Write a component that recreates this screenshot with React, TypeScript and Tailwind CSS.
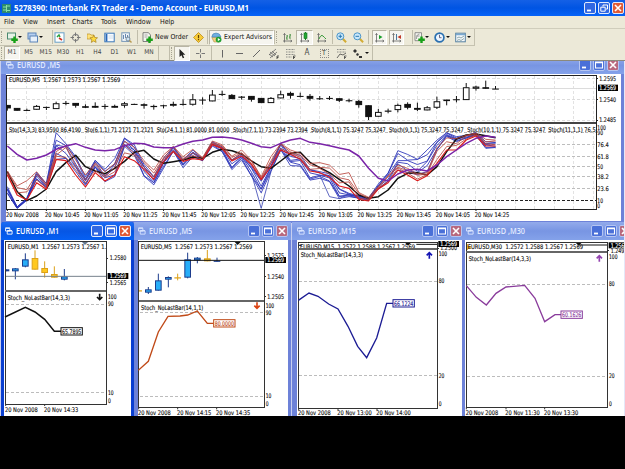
import type { ReactNode } from 'react';

const UI_FONT = "font-['DejaVu_Sans_Condensed','DejaVu_Sans',sans-serif]";

/* ---------- toolbar icons ---------- */

type IconName =
  | 'newChart' | 'profiles' | 'market' | 'crosshair' | 'navigator' | 'terminal' | 'tester'
  | 'order' | 'warning' | 'experts' | 'bars' | 'candles' | 'line' | 'zoomIn' | 'zoomOut'
  | 'scroll' | 'shift' | 'indicators' | 'clock' | 'template' | 'cursor' | 'cross' | 'vline'
  | 'hline' | 'trend' | 'channel' | 'fibo' | 'fan' | 'arrows';

const axes = <path d="M2.5 1.5V10.5M1 9H10M1.5 3l1-1.500 1 1.500M8.500 8l1.500 1-1.500 1" stroke="#666" fill="none" strokeWidth=".8" />;
const plus = <path d="M7.5 4.500V11M4.300 7.800H10.800" stroke="#18a018" strokeWidth="2.400" />;

const icons: Record<IconName, ReactNode> = {
  newChart: <><rect x=".5" y="1" width="8" height="6" fill="#e6f2e6" stroke="#4c8a70" />{plus}</>,
  profiles: <><rect x="1" y="1" width="8" height="6" fill="#b8d0f0" stroke="#5a84b8" /><rect x="3" y="4" width="7.5" height="6" fill="#e8f0fa" stroke="#5a84b8" /></>,
  market: <><rect x="1" y=".8" width="9" height="9.4" fill="#fff" stroke="#68a0c8" /><path d="M3 5l2-2 1 2" stroke="#2aa040" fill="none" strokeWidth="1.5" /><path d="M5 6l3 2" stroke="#d03020" strokeWidth="1.6" /></>,
  crosshair: <><circle cx="5.5" cy="5.5" r="3.1" fill="none" stroke="#888" strokeWidth="1.2" /><path d="M5.5 .5v3.500M5.500 7v3.500M.5 5.500h3.500M7 5.500h3.500" stroke="#777" /></>,
  navigator: <><path d="M0 2h3l1 1h3v4H0z" fill="#ffe27a" stroke="#b8902a" strokeWidth=".7" /><path d="M6.7 3.2l1.1 2.3 2.7.3-2 1.8.6 2.8-2.4-1.4-2.4 1.4.6-2.8-2-1.8 2.7-.3z" fill="#ffdc40" stroke="#a88020" strokeWidth=".7" /></>,
  terminal: <><rect x=".8" y="1.2" width="9.4" height="8.6" fill="#f8fbff" stroke="#3c78b8" /><path d="M2.5 2v7.5" stroke="#2868b8" strokeWidth="1.8" /><path d="M4.5 4h5M4.5 6h5" stroke="#bcd" strokeWidth=".6" /></>,
  tester: <><rect x=".8" y=".8" width="7.6" height="8.6" fill="#f0f4f8" stroke="#7898b8" /><path d="M2.5 3v4M4.5 2v4M6.5 3v4" stroke="#6888b0" /><circle cx="7" cy="7" r="2" fill="#cfe4f5" stroke="#678" strokeWidth=".8" /><path d="M8.5 8.5l2 2" stroke="#b89a50" strokeWidth="1.4" /></>,
  order: <><path d="M1 .7h5.5L8.500 3v6.500H1z" fill="#f5f5f0" stroke="#666" strokeWidth=".8" /><path d="M2.500 3h3M2.500 5h3" stroke="#888" strokeWidth=".7" />{plus}</>,
  warning: <><path d="M5.500 .5l5 5-5 5-5-5z" fill="#f8cc38" stroke="#bb8a18" strokeWidth=".8" /><path d="M5.500 3v3.200M5.500 7v1.300" stroke="#644400" strokeWidth="1.200" /></>,
  experts: <><path d="M.8 5.500h9L8 10H3z" fill="#f4d080" stroke="#a08030" strokeWidth=".5" /><path d="M.8 5Q1 1 5 1t5 4z" fill="#70b0e0" stroke="#4880b0" strokeWidth=".6" /><circle cx="7.600" cy="7.600" r="2.900" fill="#20a030" /><path d="M6.800 6l2.400 1.600-2.400 1.600z" fill="#fff" /></>,
  bars: <>{axes}<path d="M5 3v5M4 6h1M5 4h1M8 2v5M7 5h1M8 3h1" stroke="#3a8a3a" strokeWidth=".9" /></>,
  candles: <>{axes}<path d="M6.500 0v8" stroke="#168a20" /><rect x="5" y="1" width="3" height="5.500" fill="#25a835" stroke="#13701c" strokeWidth=".6" /></>,
  line: <>{axes}<path d="M3 7q2-5 4-3t3 3" stroke="#3a9a3a" fill="none" /></>,
  zoomIn: <><path d="M6.500 6.500l3.600 3.800" stroke="#d3ac34" strokeWidth="2" /><circle cx="4.300" cy="4.300" r="3.500" fill="#c9e7fa" stroke="#4a94c8" /><path d="M2.500 4.300h3.600M4.300 2.500v3.600" stroke="#2878b0" /></>,
  zoomOut: <><path d="M6.500 6.500l3.600 3.800" stroke="#d3ac34" strokeWidth="2" /><circle cx="4.300" cy="4.300" r="3.500" fill="#c9e7fa" stroke="#4a94c8" /><path d="M2.500 4.300h3.600" stroke="#2878b0" /></>,
  scroll: <>{axes}<path d="M5 3l3.500 2L5 7.200z" fill="#1ba02c" /></>,
  shift: <>{axes}<path d="M5.500 2v6" stroke="#4a7aa0" /><path d="M10 3L6.500 5 10 7z" fill="#c03828" /></>,
  indicators: <><path d="M1 .7h6.500v8H1z" fill="#f5f5f0" stroke="#777" strokeWidth=".8" /><path d="M2.500 7q0-5 3-5M2.500 4h3" stroke="#777" fill="none" strokeWidth=".7" />{plus}</>,
  clock: <><circle cx="5.500" cy="5.500" r="4.400" fill="#eef6ff" stroke="#2a70b0" strokeWidth="1.700" /><path d="M5.500 2.800v2.900h2" stroke="#446" fill="none" strokeWidth=".8" /></>,
  template: <><rect x=".7" y="1.200" width="9.600" height="8.600" fill="#f4f8fc" stroke="#5580a0" /><path d="M1 2.500h9" stroke="#78a8d0" strokeWidth="1.500" /><path d="M2 6l2-1 2 1 3-2M2 8.500l2-1 2 1 3-2" stroke="#688" fill="none" strokeWidth=".7" /></>,
  cursor: <path d="M3.500 1v8l2-1.700 1.300 3 1.400-.6-1.300-2.900h2.400z" fill="#222" />,
  cross: <path d="M5.500 1v3.500M5.500 6.500V10M1 5.500h3.500M6.500 5.500H10" stroke="#777" />,
  vline: <path d="M5.500 2v7.500" stroke="#666" />,
  hline: <path d="M2 5.500h7" stroke="#666" />,
  trend: <path d="M2 9l7-7" stroke="#666" />,
  channel: <><path d="M1 7l7-6M2 10l7-6M2 4l5 4M4 3l4 4M1 6l4 3" stroke="#666" strokeWidth=".8" /><path d="M9 11V8h2M9 9.500h1.500" stroke="#333" fill="none" strokeWidth=".8" /></>,
  fibo: <><path d="M1 1.500h9M1 4h9M1 6.500h9M1 9h6" stroke="#777" strokeWidth=".8" strokeDasharray="1 .5" /><path d="M8.500 11V8h2M8.500 9.500h1.500" stroke="#333" fill="none" strokeWidth=".8" /></>,
  fan: <><path d="M1 1.500h9M1 4h9" stroke="#777" strokeWidth=".8" strokeDasharray="1 .5" /><path d="M1 10l3-4 3 1 3-2M8.500 11V8h2M8.500 9.500h1.500" stroke="#444" fill="none" strokeWidth=".8" /></>,
  arrows: <path d="M1 3l2-2 2 2-2 2zM4 6l2-1 1 2-2 1zM7 8h3v2H7z" fill="#333" />,
};

function Icon({ name, pressed, className = 'w-[17px]' }: { name: IconName; pressed?: boolean; className?: string }) {
  return (
    <div
      className={`flex h-[15px] shrink-0 items-center justify-center ${className} ${
        pressed ? 'border border-[#b8b5a4] border-r-white border-b-white bg-[#f6f5ef]' : ''
      }`}
    >
      <svg className="size-[11px] shrink-0" viewBox="0 0 11 11">{icons[name]}</svg>
    </div>
  );
}

function Caret() {
  return (
    <div className="flex w-1 shrink-0 justify-center">
      <svg className="h-[2px] w-[4px]" viewBox="0 0 4 2"><path d="M0 0h4L2 2z" fill="#111" /></svg>
    </div>
  );
}

const Grip = () => <div className="mx-px h-3 w-[2px] shrink-0 border-l border-dotted border-[#a5a292]" />;
const Sep = ({ className = '' }: { className?: string }) => (
  <div className={`h-[14px] w-px shrink-0 bg-[#c0bdab] ${className}`} />
);

/* ---------- window chrome ---------- */

function WinButton({ kind, dim }: { kind: 'min' | 'max' | 'restore' | 'close'; dim?: boolean }) {
  const tone =
    kind === 'close'
      ? dim ? 'bg-[#b8697f]' : 'bg-[#df5b36]'
      : dim ? 'bg-[#4a70d8]' : 'bg-[#3168e2]';
  return (
    <div className={`flex size-3 shrink-0 items-center justify-center rounded-[2px] border ${dim ? 'border-[#b5c5f2]' : 'border-[#e2eafb]'} ${tone}`}>
      <svg className="size-[10px] shrink-0" viewBox="0 0 10 10" fill="none" stroke="#fff">
        {kind === 'min' && <path d="M2 7.500h4" strokeWidth="1.800" />}
        {kind === 'max' && <path d="M1.500 2h7v6h-7zM1.500 2.700h7" strokeWidth="1.100" />}
        {kind === 'restore' && <path d="M4 3.500V2h4.500v4H7M1.800 4.200h4.400v4H1.800z" />}
        {kind === 'close' && <path d="M2 2l6 6M8 2l-6 6" strokeWidth="1.600" />}
      </svg>
    </div>
  );
}

interface ChartWindowProps {
  title: string;
  active?: boolean;
  frame: string;
  bar: string;
  children: ReactNode;
}

function ChartWindow({ title, active, frame, bar, children }: ChartWindowProps) {
  return (
    <section className={`absolute flex flex-col overflow-hidden ${active ? 'bg-[#0a3fd0]' : 'bg-[#6d82d8]'} ${frame}`}>
      <header
        className={`flex shrink-0 items-center ${bar} ${
          active
            ? 'bg-linear-to-b from-[#1c6cf5] via-[#0656e4] to-[#0560f4]'
            : 'bg-linear-to-b from-[#93abeb] via-[#7895e3] to-[#84a2ea]'
        }`}
      >
        <svg className="mr-[3px] size-2 shrink-0" viewBox="0 0 9 9" fill="none" stroke={active ? '#fff' : '#dce6ff'}>
          <path d="M.5 1.500h5v3h-5zM2.500 4.500h5.500v3.500H2.500zM.5 1h5M2.500 4h5.500" />
        </svg>
        <span className="grow">
          <svg className="block h-3 w-[52px] overflow-visible font-['Open_Sans',sans-serif]" viewBox="0 0 52 12">
            <text
              x="0" y="9" fontSize="8.800" fontWeight="600" fill={active ? '#fff' : '#e2eaff'}
              textLength={title.length * 4.800 - 4.800} lengthAdjust="spacingAndGlyphs"
            >
              {title}
            </text>
          </svg>
        </span>
        <div className="flex shrink-0 gap-[2px]">
          <WinButton kind="min" dim={!active} />
          <WinButton kind="max" dim={!active} />
          <WinButton kind="close" dim={!active} />
        </div>
      </header>
      {children}
    </section>
  );
}

/* ---------- charts (all chart units are thirds of a pixel) ---------- */

function Label({ x, y, w, children, fill = '#111' }: { x: number; y: number; w: number; children: string; fill?: string }) {
  return (
    <text x={x} y={y} textLength={w} lengthAdjust="spacingAndGlyphs" fontSize="19" fill={fill} stroke={fill} strokeWidth=".4" xmlSpace="preserve">
      {children}
    </text>
  );
}

// [x, body top, body bottom, wick top, wick bottom, rising]
type Candle = [number, number, number, number, number, 0 | 1];

interface MiniChartProps {
  view: string;
  size: string;
  right: number;
  top: [number, number];
  low: [number, number];
  left: number;
  header: string;
  headerBox: [number, number];
  priceLine: { y: number; x?: number; color: string };
  prices: [string, number][];
  tagY: number;
  study: string;
  studyY: number;
  levels: [string, number, number?][];
  points: string;
  color: string;
  thick?: boolean;
  value: string;
  valueAt: [number, number];
  arrow: { x: number; y: number; up?: boolean; color: string };
  marker: number;
  markerColor?: string;
  dates: [string, number][];
  dateY: number;
  candles: Candle[];
}

function MiniChart(p: MiniChartProps) {
  const [t0, t1] = p.top;
  const [l0, l1] = p.low;
  const { arrow } = p;
  return (
    <svg className={`shrink-0 bg-white ${UI_FONT} ${p.size}`} viewBox={p.view} preserveAspectRatio="none">
      <defs>
        <clipPath id={`pane-${p.value}`}>
          <rect x={p.left} y={t0} width={p.right - p.left} height={t1 - t0} />
        </clipPath>
      </defs>
      <g clipPath={`url(#pane-${p.value})`}>
        {p.candles.map(([x, a, b, w0, w1, up]) => (
          <g key={x} stroke={up ? '#1c3c8c' : '#dca018'} fill={up ? '#28aef8' : '#ffc81e'} strokeWidth="3">
            <path d={`M${x} ${w0}V${w1}`} />
            <rect x={x - 8.500} y={a + 1.500} width="17" height={Math.max(b - a - 3, 0.500)} />
          </g>
        ))}
        <path d={`M${p.priceLine.x ?? p.left} ${p.priceLine.y}H${p.right}`} stroke={p.priceLine.color} strokeWidth="3" />
        <Label x={p.headerBox[0]} y={92} w={p.headerBox[1]}>{p.header}</Label>
        <path d={`M${p.marker - 9} ${t0 + 2}h18l-9 9z`} fill={p.markerColor ?? '#111'} />
      </g>
      <g fill="none" shapeRendering="crispEdges">
        <path d={`M${p.left} ${l1}V${t0}H${p.right}V${l1}z`} stroke="#333" strokeWidth="3" />
        <path d={`M${p.left} ${(t1 + l0) / 2}H${p.right}`} stroke="#666" strokeWidth="6" />
        {p.prices.map(([, y]) => <path key={y} d={`M${p.right} ${y}h6`} stroke="#333" strokeWidth="3" />)}
        {p.levels.filter((l) => l[2]).map(([t, , y]) => (
          <path key={t} d={`M${p.left + 3} ${y}H${p.right}`} stroke="#bcbcbc" strokeWidth="3" strokeDasharray="9 6" />
        ))}
      </g>
      {p.prices.map(([t, y]) => <Label key={t} x={p.right + 10} y={y + 7} w={50}>{t}</Label>)}
      <rect x={p.right + 4} y={p.tagY - 9} width="62" height="18" fill="#000" />
      <Label x={p.right + 10} y={p.tagY + 7} w={50} fill="#fff">1.2569</Label>
      {p.levels.map(([t, y]) => <Label key={t} x={p.right + 5} y={y + 7} w={t.length * 8.500}>{t}</Label>)}
      <Label x={p.left + 7} y={p.studyY} w={187}>{p.study}</Label>
      <polyline points={p.points} fill="none" stroke={p.color} strokeWidth={p.thick ? 4.500 : 4} />
      <rect x={p.valueAt[0]} y={p.valueAt[1] - 11} width="64" height="22" fill="#fff" stroke={p.color} strokeWidth="3" />
      <Label x={p.valueAt[0] + 3} y={p.valueAt[1] + 7} w={58} fill={p.color}>{p.value}</Label>
      <path
        d={arrow.up ? 'M0 10V-7M-8 0L0 -8L8 0' : 'M0 -10V7M-8 0L0 8L8 0'}
        transform={`translate(${arrow.x} ${arrow.y})`}
        fill="none"
        stroke={arrow.color}
        strokeWidth="5"
      />
      {p.dates.map(([t, x]) => (
        <g key={t}>
          <path d={`M${x + 2} ${l1}v6`} stroke="#333" strokeWidth="3" />
          <Label x={x} y={p.dateY} w={t.endsWith('2008') ? 98 : 103}>{t}</Label>
        </g>
      ))}
    </svg>
  );
}

const barX = (i: number) => 22 + i * 29.290;

// body top, body bottom, wick top, wick bottom, filled
const m5Candles: [number, number, number, number, number][] = [
  [135, 145, 135, 152, 1], [144, 152, 144, 152, 1], [150, 151, 146, 153, 1], [138, 149, 135, 149, 0],
  [141, 142, 140, 150, 1], [130, 147, 125, 147, 0], [129, 131, 123, 136, 1], [129, 137, 129, 143, 1],
  [139, 143, 133, 144, 1], [138, 143, 127, 144, 0], [138, 140, 132, 148, 1], [138, 143, 134, 143, 0],
  [130, 137, 126, 143, 0], [132, 133, 131, 134, 1], [133, 137, 130, 146, 1], [138, 141, 134, 149, 1],
  [136, 138, 134, 145, 1], [132, 137, 125, 140, 0], [132, 133, 118, 137, 1], [118, 134, 102, 137, 0],
  [119, 121, 112, 134, 1], [104, 124, 90, 124, 0], [102, 104, 92, 108, 1], [105, 117, 102, 117, 1],
  [110, 113, 108, 119, 0], [108, 119, 108, 125, 1], [114, 129, 114, 129, 1], [114, 129, 111, 129, 0],
  [103, 115, 92, 115, 0], [99, 107, 95, 116, 1], [108, 109, 98, 112, 1], [108, 116, 102, 122, 1],
  [115, 116, 108, 120, 1], [114, 115, 108, 120, 1], [115, 122, 115, 126, 1], [121, 122, 116, 127, 1],
  [123, 135, 120, 143, 1], [136, 171, 136, 180, 1], [156, 170, 147, 170, 0], [152, 155, 146, 160, 0],
  [135, 150, 131, 157, 0], [132, 143, 127, 148, 1], [144, 149, 128, 153, 1], [142, 151, 138, 151, 0],
  [124, 143, 110, 147, 0], [119, 123, 119, 136, 0], [118, 119, 108, 127, 1], [82, 120, 69, 120, 0],
  [80, 86, 77, 92, 0], [82, 86, 62, 86, 1], [86, 87, 78, 87, 1],
];

const slowLine = [335, 395, 422, 408, 387, 335, 308, 286, 320, 333, 341, 325, 304, 277, 271, 297, 310, 305, 300, 291, 295, 277, 268, 272, 282, 303, 320, 325, 303, 280, 277, 307, 323, 338, 358, 378, 405, 415, 410, 390, 355, 340, 338, 345, 320, 275, 237, 225, 222, 227, 233];
const longLine = [258, 283, 300, 295, 285, 268, 258, 251, 262, 270, 272, 269, 257, 250, 251, 261, 263, 263, 252, 244, 240, 232, 231, 234, 240, 250, 260, 263, 250, 240, 235, 247, 251, 257, 264, 270, 288, 325, 355, 363, 342, 330, 328, 333, 315, 290, 270, 250, 235, 228, 232];

// upper and lower edge of each bundle of oscillators, bar by bar
const blueTop = [380, 440, 415, 335, 370, 218, 245, 290, 350, 298, 328, 295, 232, 254, 310, 350, 295, 258, 300, 270, 295, 245, 260, 298, 280, 315, 360, 310, 247, 285, 285, 325, 335, 340, 385, 400, 407, 414, 372, 335, 272, 283, 293, 270, 238, 218, 230, 225, 218, 245, 245];
const blueLow = [400, 446, 421, 358, 385, 298, 300, 335, 376, 325, 365, 350, 262, 285, 350, 376, 325, 275, 323, 290, 303, 258, 275, 332, 300, 350, 400, 335, 272, 317, 318, 365, 355, 365, 418, 410, 415, 421, 387, 368, 330, 338, 350, 335, 270, 230, 245, 235, 226, 265, 265];
const redTop = [333, 375, 362, 333, 372, 275, 250, 300, 345, 305, 335, 310, 240, 262, 300, 330, 285, 257, 290, 268, 292, 243, 254, 288, 270, 300, 350, 290, 248, 270, 280, 308, 308, 313, 342, 338, 395, 412, 380, 345, 315, 325, 340, 338, 260, 233, 236, 224, 219, 238, 238];
const redLow = [345, 405, 420, 368, 388, 298, 302, 345, 381, 338, 363, 345, 290, 302, 328, 358, 305, 275, 304, 296, 300, 254, 265, 303, 288, 313, 359, 320, 270, 283, 298, 333, 338, 352, 378, 385, 418, 423, 387, 368, 330, 345, 362, 347, 310, 270, 270, 240, 228, 258, 258];

const trace = (ys: number[]) => ys.map((y, i) => `${barX(i)},${y}`).join(' ');
const blend = (a: number[], b: number[], t: number) =>
  a.map((y, i) => y + (b[i] - y) * Math.min(1, Math.max(0, t + Math.sin(i * 2.300 + t * 9) * 0.120)));

const levels: [string, number, number][] = [
  ['100', 203, 0], ['90', 217, 0], ['76.4', 253, 253], ['61.8', 289, 289], ['50', 319, 319],
  ['38.2', 349, 349], ['23.6', 386, 386], ['10', 421, 0], ['0', 436, 0],
];
const times = ['2008', '10:45', '11:05', '11:25', '11:45', '12:05', '12:25', '12:45', '13:05', '13:25', '13:45', '14:05', '14:25'];

function MainChart() {
  return (
    <svg className={`ml-[5px] h-[147px] w-[615px] shrink-0 bg-white ${UI_FONT}`} viewBox="18 42 1845 441">
      <defs>
        <clipPath id="study"><rect x="20" y="190" width="1768" height="256" /></clipPath>
      </defs>
      <g shapeRendering="crispEdges" strokeWidth="3" fill="none">
        {Array.from({ length: 30 }, (_, i) => (
          <path key={i} d={`M${barX(2 + i * 2)} 48V446`} stroke="#e2e2e2" strokeDasharray="9 6" />
        ))}
        {[56, 118, 181].map((y) => <path key={y} d={`M20 ${y}H1788`} stroke="#dcdcdc" strokeDasharray="9 6" />)}
        <path d="M20 86H1788" stroke="#dcdcdc" />
        {levels.map(([t, , y]) => y > 0 && <path key={t} d={`M20 ${y}H1788`} stroke="#bdbdbd" strokeDasharray="9 6" />)}
        <path d="M20 421H1788" stroke="#222" strokeDasharray="9 5" />
        <path d="M20 218H1788" stroke="#bbb" strokeDasharray="9 5" />
        <path d="M20 447V46H1788V447z" stroke="#222" />
        <path d="M20 189H1788" stroke="#444" strokeWidth="6" />
        {[56, 118, 181].map((y) => <path key={y} d={`M1788 ${y}h6`} stroke="#222" />)}
      </g>
      <g stroke="#111" strokeWidth="3">
        {m5Candles.map(([a, b, w0, w1, filled], i) => (
          <g key={i}>
            <path d={`M${barX(i)} ${w0}V${w1}`} />
            <rect
              x={Math.max(barX(i) - 8.500, 21)} y={a + 1.200} width={i ? 17 : 10}
              height={Math.max(b - a - 2.400, 0.100)} fill={filled ? '#111' : '#fff'}
            />
          </g>
        ))}
      </g>
      <g fill="none" clipPath="url(#study)" strokeLinejoin="round">
        {[0, 0.200, 0.400, 0.600, 0.800, 1].map((t) => (
          <polyline key={t} points={trace(blend(blueTop, blueLow, t))} stroke="#2832b8" strokeWidth="2.600" />
        ))}
        <polyline points={`${barX(25)},340 ${barX(26)},445 ${barX(27)},335`} stroke="#3d48b4" strokeWidth="2.500" />
        <polyline points={`${barX(32)},345 ${barX(33)},410 ${barX(34)},416 ${barX(35)},402`} stroke="#3d48b4" strokeWidth="2.500" />
        <polyline points={trace(slowLine)} stroke="#111" strokeWidth="4.500" />
        {[0, 0.350, 0.700].map((t) => (
          <polyline key={t} points={trace(blend(redTop, redLow, t))} stroke="#b8443c" strokeWidth="2.500" />
        ))}
        <polyline points={trace(redLow)} stroke="#dc1c1c" strokeWidth="3.500" />
        <polyline points={trace(longLine)} stroke="#7a24a8" strokeWidth="4.500" />
      </g>
      <Label x={27} y={67} w={334}>EURUSD,M5  1.2567 1.2573 1.2567 1.2569</Label>
      <g>
        <Label x={27} y={217} w={216}>Sto(14,3,3) 83.9590 86.4190</Label>
        <Label x={254} y={217} w={207}>Sto(6,1,1) 71.2121 71.2121</Label>
        <Label x={470} y={217} w={218}>Sto(24,1,1) 81.0000 81.0000</Label>
        <Label x={699} y={217} w={224}>Stoch(7,1,1) 73.2394 73.2394</Label>
        <Label x={933} y={217} w={224}>Stoch(8,1,1) 75.3247 75.3247</Label>
        <Label x={1167} y={217} w={224}>Stoch(9,1,1) 75.3247 75.3247</Label>
        <Label x={1402} y={217} w={234}>Stoch(10,1,1) 75.3247 75.3247</Label>
        <Label x={1645} y={217} w={142}>Stoch(11,1,1) 76.5</Label>
      </g>
      <Label x={1798} y={63} w={50}>1.2595</Label>
      <Label x={1798} y={125} w={50}>1.2540</Label>
      <Label x={1798} y={186} w={50}>1.2485</Label>
      <rect x="1794" y="74" width="60" height="19" fill="#000" />
      <Label x={1798} y={91} w={50} fill="#fff">1.2569</Label>
      {levels.map(([t, y]) => <Label key={t} x={1792} y={y + 7} w={t.length * 8.500}>{t}</Label>)}
      {times.map((t, i) => (
        <g key={t}>
          <path d={`M${barX(i * 4)} 447v6`} stroke="#222" strokeWidth="3" />
          <Label x={18 + i * 117.200} y={471} w={i ? 103 : 98}>{`20 Nov ${t}`}</Label>
        </g>
      ))}
    </svg>
  );
}

/* ---------- application ---------- */

const menu: [string, string][] = [
  ['File', 'w-[19px]'], ['View', 'w-[24px]'], ['Insert', 'w-[25px]'], ['Charts', 'w-[29px]'],
  ['Tools', 'w-[25px]'], ['Window', 'w-[34px]'], ['Help', 'w-[24px]'],
];
const periods = ['M5', 'M15', 'M30', 'H1', 'H4', 'D1', 'W1', 'MN'];

export default function App() {
  return (
    <div className={`flex h-[469px] w-[625px] flex-col overflow-hidden bg-black text-[7px] text-[#111] ${UI_FONT}`}>
      <header className="flex h-4 shrink-0 items-center bg-linear-to-b from-[#1460e6] via-[#0054e3] to-[#0763f8] pr-px pl-[2px]">
        <svg className="mr-[3px] size-[9px]" viewBox="0 0 9 9">
          <rect width="9" height="9" fill="#2c8a70" />
          <path d="M1 3h3M5 2h3M1 6h3M5 6.500h3M4.500 1v7" stroke="#8be0a8" />
        </svg>
        <span className="grow">
          <svg className="block h-3 w-[237px] overflow-visible font-['Open_Sans',sans-serif]" viewBox="0 0 237 12">
            <text x="0" y="9" fontSize="8.500" fontWeight="700" fill="#fff" textLength="235" lengthAdjust="spacingAndGlyphs">
              5278390: Interbank FX Trader 4 - Demo Account - EURUSD,M1
            </text>
          </svg>
        </span>
        <div className="flex gap-[2px]">
          <WinButton kind="min" />
          <WinButton kind="restore" />
          <WinButton kind="close" />
        </div>
      </header>

      <nav className="flex h-[13px] shrink-0 items-center border-b border-[#d0cdbc] bg-[#ece9d8] pl-1 leading-none">
        {menu.map(([name, width]) => <span key={name} className={`shrink-0 ${width}`}>{name}</span>)}
      </nav>

      <div className="flex h-[17px] shrink-0 items-center bg-[#ece9d8]">
        <div className="flex h-[17px] w-[475px] items-center border-r border-b border-[#c5c2b0]">
          <Grip />
          <Icon name="newChart" className="ml-[2px] w-[12px]" /><Caret />
          <Icon name="profiles" className="ml-[4px] w-[13px]" /><Caret />
          <Sep className="ml-[9px]" />
          <Icon name="market" className="w-[12px]" />
          <Icon name="crosshair" className="ml-[2px] w-[17px]" />
          <Icon name="navigator" />
          <Icon name="terminal" />
          <Icon name="tester" />
          <Sep className="ml-[2px]" />
          <Icon name="order" className="ml-[3px] w-[13px]" />
          <span className="ml-px w-[35px] shrink-0 text-[6.900px] whitespace-nowrap">New Order</span>
          <Icon name="warning" />
          <Sep />
          <div className="ml-px flex h-[15px] w-[65px] shrink-0 items-center border border-[#b8b5a4] border-r-white border-b-white bg-[#f6f5ef]">
            <Icon name="experts" className="w-[13px]" />
            <span className="ml-px text-[6.800px] whitespace-nowrap">Expert Advisors</span>
          </div>
          <Sep />
          <Grip />
          <Icon name="bars" />
          <Icon name="candles" pressed />
          <Icon name="line" />
          <Sep className="ml-[2px]" />
          <Icon name="zoomIn" />
          <Icon name="zoomOut" />
          <Sep className="ml-px" />
          <Icon name="scroll" pressed className="ml-[3px] w-[15px]" />
          <Icon name="shift" pressed className="ml-[2px] w-[15px]" />
          <Sep className="ml-[8px]" />
          <Icon name="indicators" className="ml-px w-[11px]" /><Caret />
          <Icon name="clock" className="ml-[4px] w-[13px]" /><Caret />
          <Icon name="template" className="ml-[4px] w-[13px]" /><Caret />
        </div>
      </div>

      <div className="flex h-[15px] shrink-0 items-center border-b border-[#8b897c] bg-[#ece9d8] text-[6.500px] text-[#444]">
        <Grip />
        <div className="flex h-[14px] w-4 shrink-0 items-center justify-center border border-[#b8b5a4] border-r-white border-b-white bg-[#f6f5ef]">M1</div>
        {periods.map((name) => <span key={name} className="w-[17.200px] shrink-0 text-center">{name}</span>)}
        <Sep />
        <Sep className="ml-[10px]" />
        <Grip />
        <Icon name="cursor" pressed className="w-4" />
        <Icon name="cross" className="ml-[2px] w-[17px]" />
        <Sep className="ml-[2px]" />
        <Icon name="vline" className="ml-[2px] w-[17px]" />
        <Icon name="hline" />
        <Icon name="trend" />
        <Icon name="channel" />
        <Icon name="fibo" />
        <span className="w-[17px] shrink-0 text-center text-[8px]">A</span>
        <span className="flex w-[17px] shrink-0 justify-center">
          <span className="flex size-[9px] items-center justify-center border border-dotted border-[#888] text-[7px]">T</span>
        </span>
        <Icon name="fan" />
        <Icon name="arrows" className="w-[15px]" /><Caret />
        <Sep className="ml-[3px]" />
      </div>

      <main className="relative h-[355px] shrink-0 overflow-hidden border-r border-[#e4e8f8] bg-[#c8cff0]">
        <ChartWindow title="EURUSD ,M5" frame="top-[-4px] left-[1px] h-[166px] w-[623px]" bar="h-[17px] pr-[5px] pb-[2px] pl-[5px]">
          <MainChart />
        </ChartWindow>

        <ChartWindow title="EURUSD ,M15" frame="top-[161px] left-[292px] h-[194px] w-[172px]" bar="h-[18px] pr-[2px] pb-px pl-[5px]">
          <MiniChart
            view="27 66 498 528" size="ml-[5px] h-[176px] w-[166px]"
            left={31} right={447} top={[72, 90]} low={[96, 571]}
            header="EURUSD,M15  1.2572 1.2588 1.2567 1.2569" headerBox={[36, 345]}
            priceLine={{ y: 79, x: 385, color: '#111' }} prices={[['1.2500', 90]]} tagY={78}
            study="Stoch_NoLastBar(14,3,3)" studyY={118}
            levels={[['100', 107], ['80', 189, 189], ['20', 473, 473], ['0', 558]]}
            points="31,247 63,225 90,235 122,258 150,273 180,325 209,385 236,419 266,360 296,256 315,256"
            color="#1c1c94" value="66.1224" valueAt={[315, 256]} marker={360}
            arrow={{ x: 424, y: 112, up: true, color: '#1414b4' }}
            dates={[['20 Nov 2008', 30], ['20 Nov 13:00', 148], ['20 Nov 14:00', 265]]} dateY={590}
            candles={[[31, 80, 84, 76, 90, 1]]}
          />
        </ChartWindow>

        <ChartWindow title="EURUSD ,M5" frame="top-[161px] left-[134px] h-[194px] w-[157px]" bar="h-[18px] pr-[3px] pb-px pl-[4px]">
          <MiniChart
            view="24 66 450 528" size="ml-[4px] h-[176px] w-[150px]"
            left={26} right={402} top={[70, 246]} low={[251, 568]}
            header="EURUSD,M5  1.2567 1.2573 1.2567 1.2569" headerBox={[32, 335]}
            priceLine={{ y: 127, color: '#111' }} prices={[['1.2575', 113], ['1.2540', 175], ['1.2505', 236]]} tagY={126}
            study="Stoch_NoLastBar(14,1,1)" studyY={275}
            levels={[['100', 263], ['90', 283, 284], ['10', 534, 535], ['0', 556]]}
            points="25,457 55,430 85,342 114,295 150,294 173,291 202,279 232,316 251,316"
            color="#c04a18" value="80.0000" valueAt={[251, 316]} marker={323}
            arrow={{ x: 381, y: 263, color: '#dc4414' }}
            dates={[['20 Nov 2008', 24], ['20 Nov 14:15', 141], ['20 Nov 14:35', 258]]} dateY={590}
            candles={[
              [26, 217, 220, 190, 222, 0], [55, 214, 224, 207, 228, 1], [85, 187, 218, 167, 218, 1],
              [115, 177, 185, 175, 208, 1], [143, 178, 180, 167, 187, 0], [173, 124, 179, 104, 181, 1],
              [202, 119, 127, 117, 136, 1], [232, 121, 130, 96, 130, 0], [261, 128, 131, 119, 131, 1],
            ]}
          />
        </ChartWindow>

        <ChartWindow title="EURUSD ,M1" active frame="top-[161px] left-[1px] h-[194px] w-[133px] rounded-t-[3px]" bar="h-[18px] pr-[3px] pb-px pl-[4px]">
          <MiniChart
            view="12 66 381 528" size="ml-[3px] h-[176px] w-[127px]"
            left={16} right={319} top={[70, 217]} low={[223, 558]}
            header="EURUSD,M1  1.2567 1.2573 1.2567 1.2569" headerBox={[23, 335]}
            priceLine={{ y: 175, color: '#76818c' }} prices={[['1.2580', 120], ['1.2565', 193]]} tagY={174}
            study="Stoch_NoLastBar(14,3,3)" studyY={247}
            levels={[['100', 237], ['90', 258, 259], ['10', 524, 524], ['0', 547]]}
            points="15,297 76,268 105,282 134,304 163,340 183,340"
            color="#111" thick value="65.7895" valueAt={[183, 340]} marker={255} markerColor="#66788c"
            arrow={{ x: 299, y: 237, color: '#111' }}
            dates={[['20 Nov 2008', 15], ['20 Nov 14:33', 132]]} dateY={582}
            candles={[
              [18, 154, 160, 154, 160, 1], [46, 151, 160, 150, 184, 1], [76, 124, 146, 106, 148, 1],
              [105, 120, 155, 97, 155, 0], [134, 150, 165, 130, 179, 0], [163, 168, 179, 145, 179, 0],
              [193, 175, 185, 153, 187, 1],
            ]}
          />
        </ChartWindow>

        <ChartWindow title="EURUSD ,M30" frame="top-[161px] left-[462px] h-[194px] w-[172px]" bar="h-[18px] pr-[3px] pb-px pl-[4px]">
          <MiniChart
            view="30 66 477 528" size="ml-[3px] h-[176px] w-[159px]"
            left={34} right={457} top={[72, 98]} low={[104, 568]}
            header="EURUSD,M30  1.2572 1.2588 1.2567 1.2569" headerBox={[38, 346]}
            priceLine={{ y: 81, x: 370, color: '#111' }} prices={[['1.2495', 97]]} tagY={82}
            study="Stoch_NoLastBar(14,3,3)" studyY={128}
            levels={[['100', 116], ['80', 197, 198], ['20', 473, 474], ['0', 556]]}
            points="34,203 64,238 94,261 123,226 153,207 209,202 240,241 269,311 300,290 318,290"
            color="#8a3c9c" value="60.1626" valueAt={[318, 290]} marker={371}
            arrow={{ x: 433, y: 121, up: true, color: '#9444b0' }}
            dates={[['20 Nov 2008', 32], ['20 Nov 11:30', 151], ['20 Nov 13:30', 267]]} dateY={590}
            candles={[[37, 84, 92, 78, 96, 0]]}
          />
        </ChartWindow>
      </main>
    </div>
  );
}
